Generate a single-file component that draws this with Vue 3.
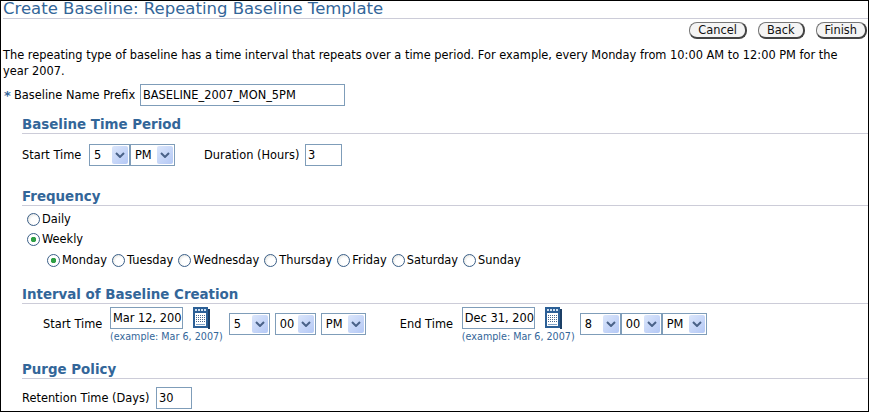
<template>
  <div class="page">
    <h1>Create Baseline: Repeating Baseline Template</h1>
    <div class="actions">
      <button v-for="label in buttons" :key="label" class="btn">{{ label }}</button>
    </div>
    <p class="intro">The repeating type of baseline has a time interval that repeats over a time period. For example, every Monday from 10:00 AM to 12:00 PM for the year 2007.</p>

    <div class="prefix-row">
      <span class="req">*</span>
      <span class="prefix-label">Baseline Name Prefix</span>
      <span class="field prefix-input">BASELINE_2007_MON_5PM</span>
    </div>

    <section class="period">
      <h2>Baseline Time Period</h2>
      <div class="row period-row">
        <span class="period-label">Start Time</span>
        <div class="selects tight">
          <span class="select w-hour"><span>5</span><i class="arrow"><svg width="10" height="6" viewBox="0 0 10 6"><path d="M1 1l4 4 4-4" fill="none" stroke="#4a6288" stroke-width="2"/></svg></i></span>
          <span class="select w-ampm-sm"><span>PM</span><i class="arrow"><svg width="10" height="6" viewBox="0 0 10 6"><path d="M1 1l4 4 4-4" fill="none" stroke="#4a6288" stroke-width="2"/></svg></i></span>
        </div>
        <span class="duration-label">Duration (Hours)</span>
        <span class="field duration-input">3</span>
      </div>
    </section>

    <section class="frequency">
      <h2>Frequency</h2>
      <div class="radio-line"><span class="radio"></span>Daily</div>
      <div class="radio-line"><span class="radio on"></span>Weekly</div>
      <div class="radio-line days">
        <span v-for="d in days" :key="d.name" class="day"><span class="radio" :class="{ on: d.on }"></span>{{ d.name }}</span>
      </div>
    </section>

    <section class="interval">
      <h2>Interval of Baseline Creation</h2>
      <div class="interval-row">
        <template v-for="t in times" :key="t.label">
          <span class="time-label" :class="t.cls">{{ t.label }}</span>
          <div class="date-col">
            <div class="date-top">
              <span class="field date-input">{{ t.date }}</span>
              <svg class="cal" width="18" height="22" viewBox="0 0 18 22">
                <rect x="1" y="0" width="15" height="21" fill="#2b5f96"/>
                <rect x="16" y="2" width="2" height="20" fill="#1c3f66"/>
                <rect x="3" y="2" width="2" height="2" fill="#cfe0f2"/>
                <rect x="6" y="2" width="2" height="2" fill="#cfe0f2"/>
                <rect x="9" y="2" width="2" height="2" fill="#cfe0f2"/>
                <rect x="12" y="2" width="2" height="2" fill="#cfe0f2"/>
                <rect x="3" y="6" width="11" height="13" fill="#fff"/>
                <path d="M4 8.500h9M4 10.500h9M4 12.500h9M4 14.500h9" stroke="#46688f" stroke-width="1"/>
                <path d="M5.500 8v7M7.500 8v7M9.500 8v7M11.500 8v7" stroke="#fff" stroke-width="1"/>
                <path d="M4 17.500h9" stroke="#7fa3c8" stroke-width="1"/>
              </svg>
            </div>
            <span class="hint">(example: Mar 6, 2007)</span>
          </div>
          <div class="selects" :class="t.gap">
            <span v-for="s in t.selects" :key="s.text" class="select" :class="s.cls"><span>{{ s.text }}</span><i class="arrow"><svg width="10" height="6" viewBox="0 0 10 6"><path d="M1 1l4 4 4-4" fill="none" stroke="#4a6288" stroke-width="2"/></svg></i></span>
          </div>
        </template>
      </div>
    </section>

    <section class="purge">
      <h2>Purge Policy</h2>
      <div class="row purge-row">
        <span class="retention-label">Retention Time (Days)</span>
        <span class="field retention-input">30</span>
      </div>
    </section>
  </div>
</template>

<script setup>
const buttons = ['Cancel', 'Back', 'Finish']

const days = [
  { name: 'Monday', on: true },
  { name: 'Tuesday' },
  { name: 'Wednesday' },
  { name: 'Thursday' },
  { name: 'Friday' },
  { name: 'Saturday' },
  { name: 'Sunday' },
]

const times = [
  {
    label: 'Start Time',
    cls: 'first',
    date: 'Mar 12, 200',
    gap: 'spaced start-selects',
    selects: [
      { text: '5', cls: 'w-num' },
      { text: '00', cls: 'w-num' },
      { text: 'PM', cls: 'w-ampm' },
    ],
  },
  {
    label: 'End Time',
    cls: 'second',
    date: 'Dec 31, 200',
    gap: 'tight end-selects',
    selects: [
      { text: '8', cls: 'w-num' },
      { text: '00', cls: 'w-num' },
      { text: 'PM', cls: 'w-ampm' },
    ],
  },
]
</script>

<style>
html, body {
  margin: 0;
  background: #fff;
}
</style>

<style scoped>
.page {
  box-sizing: border-box;
  width: 869px;
  height: 412px;
  overflow: hidden;
  border: 1px solid #000;
  font-family: "DejaVu Sans", Verdana, sans-serif;
  font-size: 11.4px;
  color: #000;
  background: #fff;
}

h1 {
  margin: 0 0 0 2px;
  height: 17px;
  line-height: 16px;
  font-size: 16.5px;
  font-weight: 400;
  color: #336699;
  border-bottom: 1px solid #ccccd8;
  white-space: nowrap;
}

.actions {
  display: flex;
  justify-content: flex-end;
  gap: 11px;
  margin: 3px 1px 0 0;
}

.btn {
  height: 17px;
  padding: 0 8px;
  border: 1px solid #777;
  border-right: 2px solid #444;
  border-bottom: 2px solid #444;
  border-radius: 8px;
  background: #f4f4f4;
  font: inherit;
  color: #111;
}

.intro {
  margin: 8px 20px 0 2px;
  line-height: 16px;
}

.prefix-row {
  display: flex;
  align-items: center;
  margin: 5px 0 0 3px;
}

.req {
  color: #336699;
  font-weight: 700;
  font-size: 13px;
  width: 10px;
}

.prefix-label {
  width: 126px;
  white-space: nowrap;
}

.field {
  box-sizing: border-box;
  display: block;
  border: 1px solid #7f9db9;
  background: #fff;
  padding-left: 2px;
}

.prefix-input {
  width: 205px;
  height: 22px;
  line-height: 20px;
}

section {
  margin-left: 21px;
}

h2 {
  margin: 0;
  height: 18px;
  line-height: 20px;
  font-size: 13.4px;
  font-weight: 700;
  color: #336699;
  border-bottom: 1px solid #ccccd8;
}

.period { margin-top: 9px; }

.row {
  display: flex;
  align-items: center;
}

.period-row { margin-top: 10px; }

.period-label { width: 67px; }

.selects {
  display: flex;
}

.spaced { gap: 5px; }

.select {
  box-sizing: border-box;
  display: flex;
  align-items: center;
  justify-content: space-between;
  height: 22px;
  padding: 1px 1px 1px 4px;
  border: 1px solid #7f9db9;
  background: #fff;
}

.arrow {
  display: flex;
  align-items: center;
  justify-content: center;
  width: 16px;
  height: 18px;
  border-radius: 2px;
  background: linear-gradient(135deg, #dbe6fb, #b4c8f5);
}

.w-hour { width: 41px; }
.w-ampm-sm { width: 45px; }
.w-num { width: 41px; }
.w-ampm { width: 45px; }

.duration-label {
  margin-left: 29px;
  width: 101px;
  white-space: nowrap;
}

.duration-input {
  width: 37px;
  height: 22px;
  line-height: 20px;
}

.frequency { margin-top: 21px; }

.radio-line {
  display: flex;
  align-items: center;
  height: 20px;
  margin-top: 0;
  padding-left: 5px;
}

.frequency h2 + .radio-line { margin-top: 3px; }

.radio-line + .days { margin-top: 1px; }

.days {
  padding-left: 25px;
  gap: 5px;
}

.day {
  display: flex;
  align-items: center;
}

.radio {
  box-sizing: border-box;
  display: inline-block;
  width: 13px;
  height: 13px;
  margin-right: 2px;
  border: 1px solid #3b5f88;
  border-radius: 50%;
  background: radial-gradient(circle at 60% 60%, #fff 40%, #d6d6ce 100%);
}

.radio.on {
  background: radial-gradient(circle, #2f9f45 0 2.5px, #fff 3px);
}

.interval { margin-top: 15px; }

.interval-row {
  display: flex;
  align-items: flex-start;
  height: 47px;
  padding-top: 3px;
}

.time-label {
  line-height: 22px;
  margin-top: 6px;
  white-space: nowrap;
}

.time-label.first { margin-left: 21px; width: 67px; }
.time-label.second { margin-left: 34px; width: 62px; }

.date-col {
  display: flex;
  flex-direction: column;
}

.date-top {
  display: flex;
  align-items: flex-start;
}

.date-input {
  width: 73px;
  height: 22px;
  line-height: 20px;
  white-space: nowrap;
  overflow: hidden;
}

.cal { margin-left: 9px; }

.hint {
  font-size: 9.6px;
  line-height: 11px;
  color: #336699;
  white-space: nowrap;
  margin-top: 2px;
}

.selects.start-selects { margin: 6px 0 0 6px; }
.selects.end-selects { margin: 6px 0 0 5px; }

.purge { margin-top: 6px; }

.purge-row { margin-top: 8px; }

.retention-label {
  width: 134px;
  white-space: nowrap;
}

.retention-input {
  width: 36px;
  height: 22px;
  line-height: 20px;
}
</style>
